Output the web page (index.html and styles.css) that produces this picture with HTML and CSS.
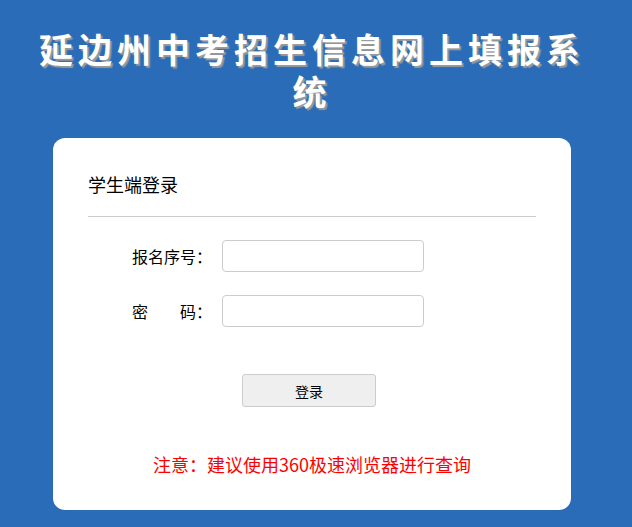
FILE: index.html
```html
<!DOCTYPE html>
<html>
<head>
	<meta charset="utf-8">
	<title>延边州中考招生信息网上填报系统</title>
	<link rel="stylesheet" href="styles.css">
</head>
<body>
	<div id='page'>
		<h1 id='theheader'>延边州中考招生信息网上填报系统</h1>
		<div id='logincard'>
			<div class='cardtitle'>学生端登录</div>
			<hr class='line'>
			<form class='loginform'>
				<div class='row'>
					<label class='label'>报名序号：</label>
					<input class='textbox' type='text'>
				</div>
				<div class='row'>
					<label class='label'>密　　码：</label>
					<input class='textbox' type='password'>
				</div>
				<div class='buttonrow'>
					<button class='buton' type='button'>登录</button>
				</div>
			</form>
			<div class='notice'>注意：建议使用360极速浏览器进行查询</div>
		</div>
	</div>
</body>
</html>
```

FILE: styles.css
```css
html, body {
	margin: 0;
	padding: 0;
	height: 100%;
}
body {
	background-color: #2b6cb9;
	font-family: "Noto Sans CJK SC", "Liberation Sans", sans-serif;
	color: #000;
	overflow: hidden;
}
#page {
	width: 624px;
}
#theheader {
	width: 570px;
	margin: 28px auto 0 auto;
	padding: 0;
	text-align: center;
	color: white;
	font-size: 34px;
	font-weight: bold;
	line-height: 42px;
	letter-spacing: 5px;
	text-shadow: 2px 2px 1px #9a9a9a;
}
#logincard {
	width: 448px;
	margin: 26px auto 0 auto;
	padding: 34px 35px 34px 35px;
	background-color: white;
	border-radius: 12px;
}
.cardtitle {
	font-size: 18px;
	line-height: 24px;
}
.line {
	border: none;
	border-top: 1px solid #cccccc;
	margin: 20px 0 0 0;
}
.loginform {
	margin: 23px 0 0 0;
}
.row {
	display: flex;
	align-items: center;
	padding-left: 44px;
	margin-bottom: 23px;
}
.label {
	width: 80px;
	margin-right: 10px;
	font-size: 16px;
	text-align: right;
}
.textbox {
	box-sizing: border-box;
	width: 202px;
	height: 32px;
	border: 1px solid #cccccc;
	border-radius: 4px;
	outline: none;
	padding: 0 6px;
	font-size: 14px;
}
.buttonrow {
	text-align: center;
	padding-top: 24px;
	padding-right: 6px;
}
.buton {
	width: 134px;
	height: 33px;
	background-color: #efefef;
	border: 1px solid #cccccc;
	border-radius: 3px;
	font-family: "Noto Sans CJK SC", sans-serif;
	font-size: 14px;
	color: #000;
}
.notice {
	margin-top: 45px;
	text-align: center;
	color: red;
	font-size: 18px;
	line-height: 24px;
}
```
